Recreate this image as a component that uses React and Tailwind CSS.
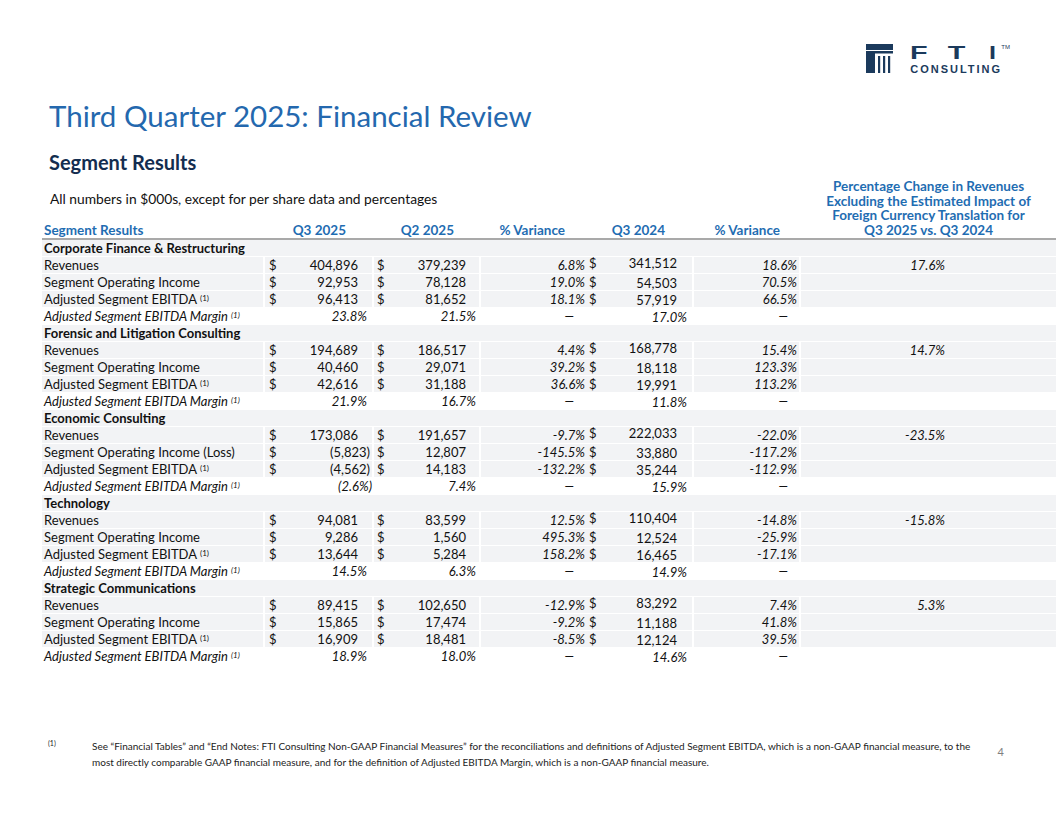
import React from "react";

const segments = [
  {
    name: "Corporate Finance & Restructuring",
    rows: [
      ["Revenues", "404,896", "379,239", "6.8%", "341,512", "18.6%", "17.6%"],
      ["Segment Operating Income", "92,953", "78,128", "19.0%", "54,503", "70.5%", ""],
      ["Adjusted Segment EBITDA", "96,413", "81,652", "18.1%", "57,919", "66.5%", ""],
    ],
    margin: ["23.8%", "21.5%", "17.0%"],
  },
  {
    name: "Forensic and Litigation Consulting",
    rows: [
      ["Revenues", "194,689", "186,517", "4.4%", "168,778", "15.4%", "14.7%"],
      ["Segment Operating Income", "40,460", "29,071", "39.2%", "18,118", "123.3%", ""],
      ["Adjusted Segment EBITDA", "42,616", "31,188", "36.6%", "19,991", "113.2%", ""],
    ],
    margin: ["21.9%", "16.7%", "11.8%"],
  },
  {
    name: "Economic Consulting",
    rows: [
      ["Revenues", "173,086", "191,657", "-9.7%", "222,033", "-22.0%", "-23.5%"],
      ["Segment Operating Income (Loss)", "(5,823)", "12,807", "-145.5%", "33,880", "-117.2%", ""],
      ["Adjusted Segment EBITDA", "(4,562)", "14,183", "-132.2%", "35,244", "-112.9%", ""],
    ],
    margin: ["(2.6%)", "7.4%", "15.9%"],
  },
  {
    name: "Technology",
    rows: [
      ["Revenues", "94,081", "83,599", "12.5%", "110,404", "-14.8%", "-15.8%"],
      ["Segment Operating Income", "9,286", "1,560", "495.3%", "12,524", "-25.9%", ""],
      ["Adjusted Segment EBITDA", "13,644", "5,284", "158.2%", "16,465", "-17.1%", ""],
    ],
    margin: ["14.5%", "6.3%", "14.9%"],
  },
  {
    name: "Strategic Communications",
    rows: [
      ["Revenues", "89,415", "102,650", "-12.9%", "83,292", "7.4%", "5.3%"],
      ["Segment Operating Income", "15,865", "17,474", "-9.2%", "11,188", "41.8%", ""],
      ["Adjusted Segment EBITDA", "16,909", "18,481", "-8.5%", "12,124", "39.5%", ""],
    ],
    margin: ["18.9%", "18.0%", "14.6%"],
  },
];

function Sup() {
  return <sup className="text-[8px] ml-[3px] relative -top-[1px]">(1)</sup>;
}

function Logo() {
  return (
    <div className="flex items-start gap-[17px] text-[#1b3a5c]">
      <svg width="27" height="29" viewBox="0 0 27 29">
        <rect x="0" y="0" width="27" height="6" fill="#1b3a5c" />
        <rect x="0" y="7" width="27" height="2.5" fill="#1b3a5c" />
        <rect x="0" y="9" width="9" height="20" fill="#1b3a5c" />
        <rect x="12" y="12" width="2.2" height="17" fill="#1b3a5c" />
        <rect x="17" y="12" width="2.2" height="17" fill="#1b3a5c" />
        <rect x="22" y="12" width="2.2" height="17" fill="#1b3a5c" />
      </svg>
      <div className="flex flex-col">
        <div className="flex items-start">
          <div className="flex justify-between w-[86px] h-[18px] text-[18px] leading-[18px] font-bold font-['Liberation_Sans',sans-serif]">
            <span className="inline-block scale-x-[1.6] origin-left">F</span>
            <span className="inline-block scale-x-[1.6]">T</span>
            <span className="inline-block scale-x-[1.4] origin-right">I</span>
          </div>
          <span className="text-[6px] leading-[6px] ml-[5px] font-['Liberation_Sans',sans-serif]">TM</span>
        </div>
        <div className="mt-[1px] text-[11px] leading-[12px] tracking-[0.18em] font-semibold font-['Liberation_Sans',sans-serif] whitespace-nowrap">
          CONSULTING
        </div>
      </div>
    </div>
  );
}

function DataRow({ r }) {
  const [label, a, b, v1, c, v2, fx] = r;
  const isRev = label === "Revenues";
  const cell = "h-[16px] bg-[#f2f3f5] flex items-center";
  return (
    <div className="flex gap-[2px] h-[16px] mb-[1px]">
      <div className={`${cell} w-[221px] pl-[2px]`}>
        {label}
        {label.startsWith("Adjusted") && <Sup />}
      </div>
      <div className={`${cell} w-[107px] pl-[4px]`}>
        <span>$</span>
        <span className={`flex-1 text-right ${a.startsWith("(") ? "pr-[2px]" : "pr-[14px]"}`}>{a}</span>
      </div>
      <div className={`${cell} w-[105px] pl-[3px]`}>
        <span>$</span>
        <span className="flex-1 text-right pr-[13px]">{b}</span>
      </div>
      <div className={`${cell} w-[211px]`}>
        <span className="w-[104px] text-right italic">{v1}</span>
        <span className={`ml-[4px] ${isRev ? "-translate-y-[2px]" : ""}`}>$</span>
        <span className={`flex-1 text-right pr-[15px] ${isRev ? "-translate-y-[2px]" : "translate-y-[1px]"}`}>{c}</span>
      </div>
      <div className={`${cell} w-[105px] justify-end pr-[2px] italic`}>{v2}</div>
      <div className={`${cell} w-[255px] justify-end pr-[111px] italic`}>{fx}</div>
    </div>
  );
}

function MarginRow({ m }) {
  return (
    <div className="flex gap-[2px] h-[16px] mb-[1px] italic">
      <div className="w-[221px] pl-[2px] flex items-center">
        Adjusted Segment EBITDA Margin
        <Sup />
      </div>
      <div className={`w-[107px] flex items-center justify-end ${m[0].startsWith("(") ? "pr-[0px]" : "pr-[5px]"}`}>{m[0]}</div>
      <div className="w-[105px] flex items-center justify-end pr-[3px]">{m[1]}</div>
      <div className="w-[211px] flex items-center">
        <span className="w-[93px] text-right">—</span>
        <span className="flex-1 text-right pr-[5px] translate-y-[1px]">{m[2]}</span>
      </div>
      <div className="w-[105px] flex items-center justify-end pr-[11px]">—</div>
      <div className="w-[255px]" />
    </div>
  );
}

export default function App() {
  return (
    <div className="w-[1056px] h-[816px] bg-white overflow-hidden flex flex-col font-['Lato',sans-serif] text-[#111]">
      <div className="flex justify-end pt-[44px] pr-[46px] h-[73px]">
        <Logo />
      </div>

      <h1 className="mt-[27px] pl-[49px] h-[32px] text-[29.5px] leading-[32px] text-[#2468ae] whitespace-nowrap">
        Third Quarter 2025: Financial Review
      </h1>
      <h2 className="mt-[18px] pl-[49px] h-[24px] text-[20px] leading-[24px] font-bold text-[#132d50]">
        Segment Results
      </h2>

      <div className="ml-[42px] mt-[5px]">
        <div className="flex items-end border-b-2 border-[#a9a9a9]">
          <div className="flex-1 flex flex-col">
            <div className="pl-[8px] text-[13.8px] leading-[18px] mb-[14px]">
              All numbers in $000s, except for per share data and percentages
            </div>
            <div className="flex h-[16px] text-[13.5px] leading-[16px] font-bold text-[#1f6db2]">
              <span className="w-[223px] pl-[2px]">Segment Results</span>
              <span className="w-[109px] text-right pr-[28px]">Q3 2025</span>
              <span className="w-[107px] text-right pr-[27px]">Q2 2025</span>
              <span className="w-[106px] text-right pr-[22px]">% Variance</span>
              <span className="w-[107px] text-right pr-[29px]">Q3 2024</span>
              <span className="w-[107px] text-right pr-[21px]">% Variance</span>
            </div>
          </div>
          <div className="w-[255px] text-center text-[13.5px] leading-[14.7px] font-bold text-[#1f6db2]">
            Percentage Change in Revenues
            <br />
            Excluding the Estimated Impact of
            <br />
            Foreign Currency Translation for
            <br />
            Q3 2025 vs. Q3 2024
          </div>
        </div>

        <div className="text-[13px] leading-[16px]">
          {segments.map((s) => (
            <div key={s.name}>
              <div className="h-[16px] mb-[1px] bg-[#f2f3f5] pl-[2px] font-bold flex items-center">{s.name}</div>
              {s.rows.map((r) => (
                <DataRow key={r[0]} r={r} />
              ))}
              <MarginRow m={s.margin} />
            </div>
          ))}
        </div>
      </div>

      <div className="mt-[73px] flex items-start pl-[48px] pr-[52px]">
        <span className="w-[44px] text-[7px] leading-[10px] text-[#222]">(1)</span>
        <div className="text-[10px] leading-[16px] text-[#222] whitespace-nowrap">
          See “Financial Tables” and “End Notes: FTI Consulting Non-GAAP Financial Measures” for the reconciliations and definitions of Adjusted Segment EBITDA, which is a non-GAAP financial measure, to the
          <br />
          most directly comparable GAAP financial measure, and for the definition of Adjusted EBITDA Margin, which is a non-GAAP financial measure.
        </div>
        <span className="ml-auto mt-[8px] text-[11px] leading-[12px] text-[#7f7f7f]">4</span>
      </div>
    </div>
  );
}
